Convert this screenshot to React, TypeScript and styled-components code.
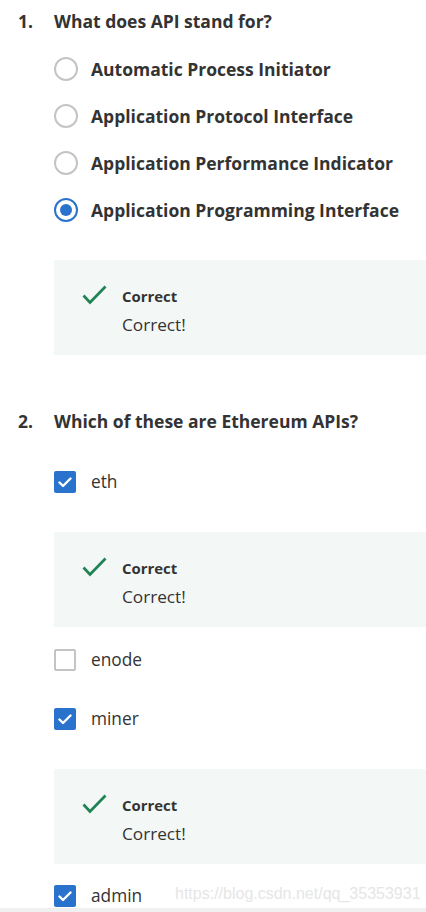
import React from "react";
import styled, { createGlobalStyle } from "styled-components";

const Global = createGlobalStyle`
  html, body { margin: 0; padding: 0; background: #fff; }
  body { font-family: "Open Sans", "Noto Sans", sans-serif; color: #333; }
`;

const Page = styled.div`
  position: relative;
  width: 426px;
  height: 912px;
  overflow: hidden;
  display: flex;
  flex-direction: column;
`;

const Content = styled.div`
  flex: 1;
  padding: 9px 0 0 18px;
  display: flex;
  flex-direction: column;
`;

const Question = styled.div<{ $top?: number }>`
  display: flex;
  font-size: 17.5px;
  line-height: 24px;
  font-weight: 700;
  color: #333;
  margin-top: ${(p) => p.$top ?? 0}px;
`;

const Num = styled.span`
  width: 36px;
  flex: none;
`;

const Options = styled.div`
  margin-left: 36px;
  display: flex;
  flex-direction: column;
`;

const Option = styled.div<{ $top: number; $bold?: boolean }>`
  display: flex;
  align-items: center;
  height: 24px;
  margin-top: ${(p) => p.$top}px;
  font-size: ${(p) => (p.$bold ? 17.5 : 17.3)}px;
  line-height: 24px;
  font-weight: ${(p) => (p.$bold ? 700 : 400)};
  color: #333;
  white-space: nowrap;
`;

const Control = styled.span`
  width: 24px;
  height: 24px;
  flex: none;
  display: flex;
  align-items: center;
  justify-content: center;
  margin-right: 13px;
`;

const Radio = styled.span<{ $on?: boolean }>`
  box-sizing: border-box;
  width: 24px;
  height: 24px;
  border-radius: 50%;
  border: 2px solid ${(p) => (p.$on ? "#2a73cc" : "#c4c4c4")};
  display: flex;
  align-items: center;
  justify-content: center;
  &::after {
    content: "";
    display: ${(p) => (p.$on ? "block" : "none")};
    width: 12px;
    height: 12px;
    border-radius: 50%;
    background: #2a73cc;
  }
`;

const Box = styled.span<{ $on?: boolean }>`
  box-sizing: border-box;
  width: 22px;
  height: 22px;
  margin-left: -2px;
  border-radius: 2px;
  background: ${(p) => (p.$on ? "#2a73cc" : "#fff")};
  border: ${(p) => (p.$on ? "none" : "2px solid #c4c4c4")};
  display: flex;
  align-items: center;
  justify-content: center;
`;

const Feedback = styled.div<{ $top: number }>`
  margin-top: ${(p) => p.$top}px;
  height: 95px;
  box-sizing: border-box;
  background: #f3f8f7;
  padding: 25px 0 0 28px;
  display: flex;
  gap: 15px;
`;

const FeedText = styled.div`
  display: flex;
  flex-direction: column;
`;

const FeedTitle = styled.div`
  font-size: 14.9px;
  line-height: 20px;
  font-weight: 700;
  color: #333;
  margin-top: 1px;
`;

const FeedBody = styled.div`
  font-size: 17.2px;
  line-height: 24px;
  color: #333;
  margin-top: 7px;
`;

const BottomBar = styled.div`
  height: 5px;
  background: #f0f0f0;
  flex: none;
`;

const Watermark = styled.div`
  position: absolute;
  left: 175px;
  top: 884px;
  font-family: "Liberation Sans", Arial, sans-serif;
  font-size: 16px;
  line-height: 20px;
  color: #e6e6e6;
  pointer-events: none;
`;

const GreenCheck = () => (
  <svg width="25" height="20" viewBox="0 0 25 20" fill="none">
    <path d="M1.5 10.5 L8 17.5 L23.5 1.5" stroke="#1f8354" strokeWidth="2.7" strokeLinecap="butt" strokeLinejoin="miter" />
  </svg>
);

const WhiteCheck = () => (
  <svg width="14" height="11" viewBox="0 0 14 11" fill="none">
    <path d="M1.5 5.5 L5 9 L12.5 1.5" stroke="#fff" strokeWidth="2.4" strokeLinecap="round" strokeLinejoin="round" />
  </svg>
);

const Correct = ({ top }: { top: number }) => (
  <Feedback $top={top}>
    <GreenCheck />
    <FeedText>
      <FeedTitle>Correct</FeedTitle>
      <FeedBody>Correct!</FeedBody>
    </FeedText>
  </Feedback>
);

const radios = [
  { label: "Automatic Process Initiator", on: false },
  { label: "Application Protocol Interface", on: false },
  { label: "Application Performance Indicator", on: false },
  { label: "Application Programming Interface", on: true },
];

export default function App() {
  return (
    <>
      <Global />
      <Page>
        <Content>
          <Question>
            <Num>1.</Num>
            <span>What does API stand for?</span>
          </Question>
          <Options>
            {radios.map((r, i) => (
              <Option key={r.label} $top={i === 0 ? 24 : 23} $bold>
                <Control>
                  <Radio $on={r.on} />
                </Control>
                {r.label}
              </Option>
            ))}
            <Correct top={38} />
          </Options>

          <Question $top={54}>
            <Num>2.</Num>
            <span>Which of these are Ethereum APIs?</span>
          </Question>
          <Options>
            <Option $top={37}>
              <Control>
                <Box $on>
                  <WhiteCheck />
                </Box>
              </Control>
              eth
            </Option>
            <Correct top={38} />
            <Option $top={21}>
              <Control>
                <Box />
              </Control>
              enode
            </Option>
            <Option $top={35}>
              <Control>
                <Box $on>
                  <WhiteCheck />
                </Box>
              </Control>
              miner
            </Option>
            <Correct top={38} />
            <Option $top={20}>
              <Control>
                <Box $on>
                  <WhiteCheck />
                </Box>
              </Control>
              admin
            </Option>
          </Options>
        </Content>
        <BottomBar />
        <Watermark>https://blog.csdn.net/qq_35353931</Watermark>
      </Page>
    </>
  );
}
